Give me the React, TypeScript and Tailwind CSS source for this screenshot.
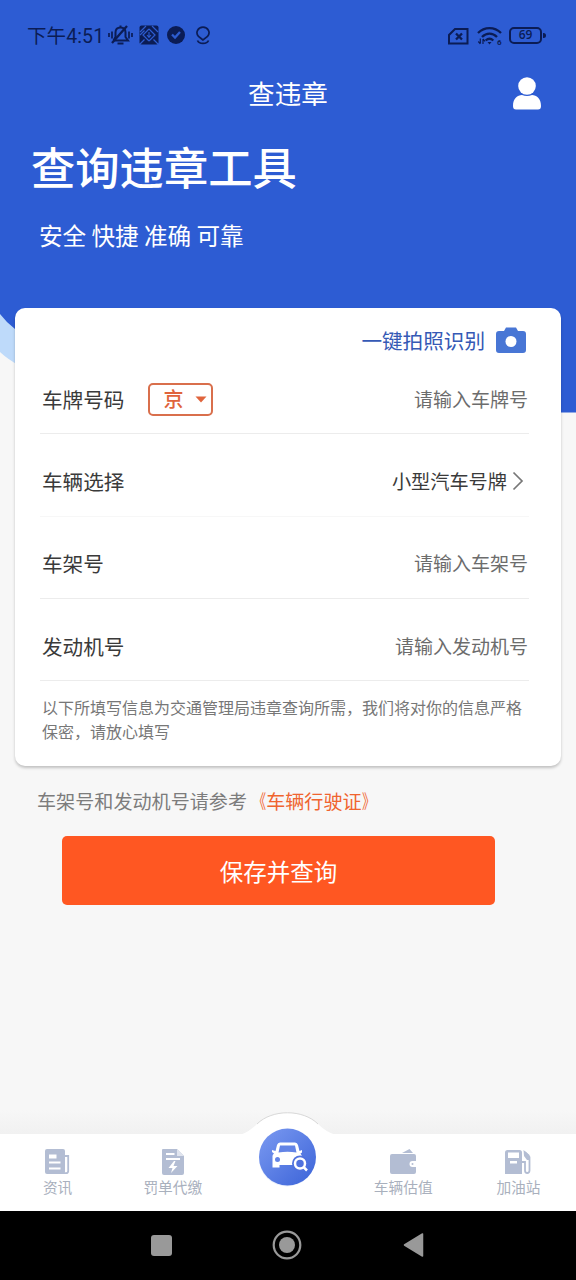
import type { ReactNode } from "react";

type FieldProps = {
	label: string;
	children: ReactNode;
	extra?: ReactNode;
	faint?: boolean;
};

function Field({ label, children, extra, faint }: FieldProps) {
	return (
		<div className={`ml-[-2px] flex h-[82.3px] items-center border-b pt-[13px] pl-[2px] ${faint ? "border-[#f7f7f7]" : "border-[#ececec]"}`}>
			<span className="text-[20.6px] text-[#3a3a3a]">{label}</span>
			{extra}
			<div className="mr-px ml-auto flex items-center text-[19px] text-[#6c6c6c]">{children}</div>
		</div>
	);
}

function StatusBar() {
	return (
		<div className="flex h-[70px] items-center pl-[27px] pr-[30px] text-[#0b1c55]">
			<span className="relative top-[2px] font-['Roboto','Noto_Sans_CJK_SC',sans-serif] text-[19.5px] leading-[24px] whitespace-nowrap tracking-[0.1px]">
				下午4:51
			</span>
			<svg width="25" height="22" viewBox="0 0 25 22" fill="none" stroke="currentColor" strokeWidth="2" className="ml-[4px]">
				<path d="M5.5 16.500H20L17.500 13V8.500C17.500 5.500 15.500 3.500 12.500 3.500S7.500 5.500 7.500 8.500V13L5.500 16.500M12.500 1.500V4" />
				<path d="M9.500 19.500H15.500" />
				<path d="M4 19L19 2" strokeWidth="2.300" />
				<path d="M1 9V13M4 7.500V14.500M21 7.500V14.500M24 9V13" strokeWidth="1.700" />
			</svg>
			<svg width="20" height="20" viewBox="0 0 20 20" className="ml-[6px]">
				<rect x="0.500" y="0.500" width="19" height="19" rx="2" fill="currentColor" />
				<path d="M1 7L7 1M13 1L19 7M5.500 5.500L1 10M14.500 14.500L19 19M5.500 14.500L1 19M10 4L4 10L10 16M10 4L16 10L10 16" stroke="#2d5cd0" strokeWidth="1.200" fill="none" />
				<path d="M10 7V12M8 10L10 12.300L12 10" stroke="#2d5cd0" strokeWidth="1.100" fill="none" />
			</svg>
			<svg width="18" height="18" viewBox="0 0 18 18" className="ml-[8px]">
				<circle cx="9" cy="9" r="9" fill="currentColor" />
				<path d="M5 8.500L8 11.500L13 6" stroke="#2d5cd0" strokeWidth="2.300" fill="none" />
			</svg>
			<svg width="16" height="19" viewBox="0 0 16 19" fill="none" stroke="currentColor" strokeWidth="1.700" className="ml-[10px]">
				<path d="M8 14L3.500 10.500C0 6.500 3 1.200 8 1.200S16 6.500 12.500 10.500Z" />
				<path d="M2.500 14.500C4 18.300 12 18.300 13.500 14.500" />
			</svg>
			<svg width="21" height="17" viewBox="0 0 21 17" fill="none" stroke="currentColor" strokeWidth="2" className="relative top-px ml-auto">
				<path d="M1 15.500V7L7 1H19.500V15.500Z" />
				<path d="M8 5.500L14 11.500M14 5.500L8 11.500" strokeWidth="2.300" />
			</svg>
			<svg width="26" height="20" viewBox="0 0 26 20" fill="none" stroke="currentColor" strokeWidth="2.300" className="relative top-px ml-[8px]">
				<path d="M1 7C7.500 0.500 17.500 0.500 24 7" />
				<path d="M5 11C9.500 6.500 15.500 6.500 20 11" />
				<path d="M8.700 14.500C11 12.300 14 12.300 16.300 14.500" />
				<path d="M10.500 16H14.500L12.500 18.500Z" fill="currentColor" stroke="none" />
				<path d="M3.300 12.500V17.500M1.300 15.500L3.300 17.800M6 18V13M6 13L8 15.300" strokeWidth="1.200" />
				<text x="20" y="18.500" fontSize="8" fontWeight="700" fill="currentColor" stroke="none" fontFamily="Roboto, sans-serif">6</text>
			</svg>
			<div className="ml-[6px] flex h-[17px] w-[33px] items-center justify-center rounded-[5px] border-2 border-current font-['Open_Sans',sans-serif] text-[12px] leading-none font-semibold">69</div>
			<div className="ml-px h-[5px] w-[3px] rounded-r bg-current" />
		</div>
	);
}

function HeaderBackground() {
	return (
		<svg width="576" height="413" viewBox="0 0 576 413" className="absolute top-0 left-0 -z-10">
			<path d="M0 280V352Q8 359.500 20 366L100 380V280Z" fill="#bedafa" />
			<path d="M0 0H576V412.500H260Q80 400 15 329Q6 322 0 314Z" fill="#2d5cd3" />
		</svg>
	);
}

const tabs = [
	{
		label: "资讯",
		icon: (
			<>
				<rect x="0" y="1" width="20" height="25" rx="2" fill="currentColor" />
				<path d="M20 8H23.200V23Q23.200 25.200 21 25.200H17" stroke="currentColor" strokeWidth="1.800" fill="none" />
				<path d="M4 14.500H15.500M4 20.500H15.500" stroke="#fff" strokeWidth="2" />
				<path d="M4 6.500H11.500V10.500H4Z" fill="#fff" />
			</>
		),
	},
	{
		label: "罚单代缴",
		icon: (
			<>
				<path d="M2.500 1H17L24 8V25Q24 27 22 27H4Q2 27 2 25V2Z" fill="currentColor" />
				<path d="M17 1V8H24Z" fill="#e0e4ee" />
				<path d="M6 6H14.500M6 11H20" stroke="#fff" strokeWidth="1.900" />
				<path d="M14 13L8.500 20H12.500L11 25L17.500 18H13.500L15.500 13Z" fill="#fff" />
			</>
		),
	},
	null,
	{
		label: "车辆估值",
		icon: (
			<>
				<path d="M12 5L19.500 1L23 5Z" fill="currentColor" />
				<path d="M2 6H24Q26 6 26 8V13H22.500A3 3 0 0 0 22.500 19H26V24Q26 26 24 26H2Q0 26 0 24V8Q0 6 2 6Z" fill="currentColor" />
				<circle cx="22.500" cy="16" r="1" fill="currentColor" />
			</>
		),
	},
	{
		label: "加油站",
		icon: (
			<>
				<path d="M2.500 2H14.500Q17 2 17 4.500V26H0V4.500Q0 2 2.500 2Z" fill="currentColor" />
				<path d="M3 4.500H14V10H3ZM5 13H12V15.500H5Z" fill="#fff" />
				<path d="M17 14H20V22.500Q20 25 22.200 25T24.500 22.500V9L20 4" stroke="currentColor" strokeWidth="1.800" fill="none" />
				<path d="M18.500 2L24.500 7V12H22L19 8Z" fill="currentColor" />
			</>
		),
	},
];

function TabBar() {
	return (
		<div className="relative flex h-[77px] bg-white">
			<div className="absolute -top-6 left-0 h-6 w-full bg-linear-to-b from-[#f7f7f7] to-[#f1f1f1]" />
			<svg width="100" height="24" viewBox="0 0 100 24" className="absolute -top-[22px] left-[238px]">
				<path d="M2 23Q11 20 19 12C34 -3 65 -3 80 12Q88 20 98 23Z" fill="#fff" />
				<path d="M19 12C34 -3 65 -3 80 12" fill="none" stroke="#d4d4d4" strokeWidth="0.900" />
			</svg>
			{tabs.map((tab, i) =>
				tab ? (
					<div key={tab.label} className="flex flex-1 flex-col items-center pt-[14px] text-[#b3bdd3]">
						<svg width="26" height="28" viewBox="0 0 26 28">{tab.icon}</svg>
						<span className="relative top-px text-[14.7px] leading-[20px] text-[#a9b0bd]">{tab.label}</span>
					</div>
				) : (
					<div key={i} className="relative flex flex-1 justify-center">
						<svg width="58" height="60" viewBox="0 0 58 60" className="relative -top-[7px]">
							<defs>
								<linearGradient id="car" x1="0" y1="0" x2="1" y2="1">
									<stop offset="0" stopColor="#7b9af1" />
									<stop offset="1" stopColor="#3b63d8" />
								</linearGradient>
							</defs>
							<circle cx="28" cy="31.500" r="28" fill="#e9effc" />
							<circle cx="28.500" cy="30" r="28.500" fill="url(#car)" />
							<path d="M16.500 24L18 18Q18.800 15.500 21 15.500H36Q38.300 15.500 39 18L40.500 24L43 23V25.500L41.500 26.500Q43 28 43 30V38H20.500V40.500H13.500V29Q13.500 27.500 15 26.500L13 25V23Z" fill="#fff" />
							<path d="M19.500 25.500L21 18.500H36L37.500 25.500Q28.500 24 19.500 25.500Z" fill="#6384e6" />
							<circle cx="18.500" cy="32.500" r="2.500" fill="#6384e6" />
							<circle cx="41" cy="36.500" r="8" fill="#5072de" />
							<circle cx="41" cy="36.500" r="5" fill="none" stroke="#fff" strokeWidth="2.500" />
							<path d="M44.500 40L48 43.500" stroke="#fff" strokeWidth="2.500" />
						</svg>
					</div>
				),
			)}
		</div>
	);
}

function SystemNav() {
	return (
		<div className="flex h-[69px] items-center justify-between bg-black pr-[152px] pb-px pl-[151px] text-[#999]">
			<div className="h-[21px] w-[21px] rounded-[3px] bg-[#999]" />
			<svg width="30" height="30" viewBox="0 0 30 30" className="mr-[1px]">
				<circle cx="15" cy="15" r="13.300" fill="none" stroke="currentColor" strokeWidth="2.200" />
				<circle cx="15" cy="15" r="8" fill="currentColor" />
			</svg>
			<svg width="21" height="26" viewBox="0 0 21 26">
				<path d="M1.500 13L19.500 2V24Z" fill="currentColor" stroke="currentColor" strokeWidth="1.500" strokeLinejoin="round" />
			</svg>
		</div>
	);
}

export default function App() {
	return (
		<div className="relative isolate flex h-[1280px] w-[576px] flex-col overflow-hidden bg-[#f7f7f7] font-['Noto_Sans_CJK_SC',sans-serif]">
			<HeaderBackground />
			<StatusBar />
			<header className="grid h-[46px] grid-cols-3 items-center text-white">
				<h1 className="col-start-2 text-center text-[26.6px] leading-[40px]">查违章</h1>
				<svg width="30" height="34" viewBox="0 0 30 34" fill="currentColor" className="mr-[34px] justify-self-end">
					<circle cx="15" cy="10" r="8.800" />
					<path d="M1 30C1 22.500 5.500 19 10 19Q15 21 20 19C24.500 19 29 22.500 29 30Q29 33.500 26 33.500H4Q1 33.500 1 30Z" />
				</svg>
			</header>
			<section className="h-[192px] text-white">
				<h2 className="pt-[20px] pl-[31px] text-[44.300px] leading-[60px] font-medium">查询违章工具</h2>
				<p className="pt-[22px] pl-[39px] text-[23.600px] leading-[34px]">安全 快捷 准确 可靠</p>
			</section>

			<main className="mx-[15px] h-[458px] rounded-[10px] bg-white pr-[32px] pl-[27px] shadow-[0_2px_3px_rgba(0,0,0,0.22)]">
				<div className="flex h-[44px] items-center justify-end pt-[20px] pr-[2px] text-[20.600px] text-[#3559b5]">
					<span className="leading-[30px]">一键拍照识别</span>
					<svg width="32" height="28" viewBox="0 0 32 28" className="ml-[10px]">
						<path d="M4 5H9L11 1.500H21L23 5H28Q31 5 31 8V24Q31 27 28 27H4Q1 27 1 24V8Q1 5 4 5Z" fill="#4876d5" />
						<circle cx="16" cy="15.500" r="5.500" fill="#fff" />
					</svg>
				</div>
				<Field
					label="车牌号码"
					extra={
						<button className="ml-[24px] flex h-[33px] w-[65px] items-center rounded-[5px] border-2 border-[#d96f4c] pl-[13px] text-[20px] leading-none font-medium text-[#e0643c]">
							京
							<svg width="12" height="7" viewBox="0 0 12 7" className="ml-[12px] shrink-0">
								<path d="M0.500 0.500H11.500L6 6.500Z" fill="currentColor" />
							</svg>
						</button>
					}
				>
					请输入车牌号
				</Field>
				<Field label="车辆选择" faint>
					<span className="text-[19.200px] text-[#3a3a3a]">小型汽车号牌</span>
					<svg width="12" height="20" viewBox="0 0 12 20" fill="none" stroke="#777" strokeWidth="1.700" className="mr-[4px] ml-[5px]">
						<path d="M1.500 1.500L10 10L1.500 18.500" />
					</svg>
				</Field>
				<Field label="车架号">请输入车架号</Field>
				<Field label="发动机号">请输入发动机号</Field>
				<p className="pt-[15px] text-[16px] leading-[23.500px] text-[#777]">
					以下所填写信息为交通管理局违章查询所需，我们将对你的信息严格
					<br />
					保密，请放心填写
				</p>
			</main>

			<p className="mt-[21px] pl-[37px] text-[19.100px] leading-[28px] whitespace-nowrap text-[#7c7c7c]">
				车架号和发动机号请参考
				<span className="text-[#f0642f]">
					<span className="inline-block origin-right scale-x-70">《</span>车辆行驶证<span className="inline-block origin-left scale-x-70">》</span>
				</span>
			</p>
			<button className="mt-[21px] ml-[62px] h-[69px] w-[433px] rounded-[5px] bg-[#ff5722] pt-[2px] text-[23.500px] text-white">保存并查询</button>

			<div className="mt-auto">
				<TabBar />
				<SystemNav />
			</div>
		</div>
	);
}
